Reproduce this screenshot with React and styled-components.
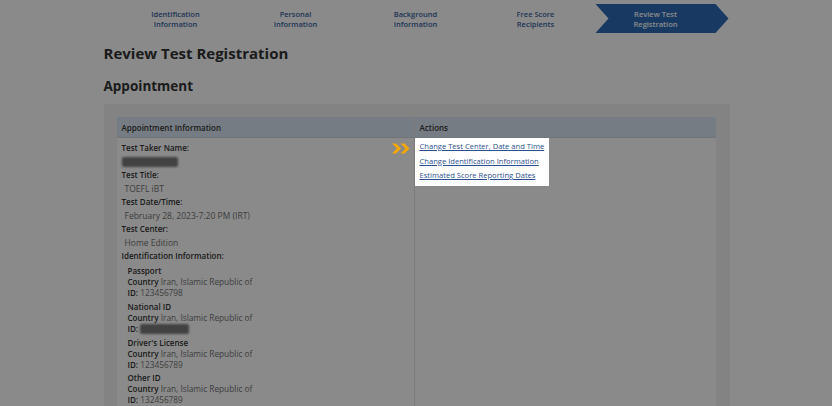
import React from "react";
import styled, { createGlobalStyle } from "styled-components";

const GlobalStyle = createGlobalStyle`
  html, body {
    margin: 0;
    padding: 0;
    background: #ffffff;
    overflow: hidden;
  }
  body {
    font-family: "Open Sans", "Liberation Sans", Arial, sans-serif;
    color: #333333;
  }
`;

const Page = styled.div`
  width: 626px;
  margin: 0 auto;
  padding-left: 1px;
`;

const StepBar = styled.div`
  display: flex;
  margin: 4px 0 0 12px;
  height: 29px;
`;

const Step = styled.div`
  width: ${p => (p.active ? "133px" : "120px")};
  padding-right: ${p => (p.active ? "13px" : "0")};
  box-sizing: border-box;
  display: flex;
  align-items: center;
  justify-content: center;
  text-align: center;
  font-size: 7.5px;
  line-height: 10px;
  font-weight: 600;
  color: ${p => (p.active ? "#ffffff" : "#3a64a0")};
  background: ${p => (p.active ? "#2b6ab5" : "transparent")};
  clip-path: ${p =>
    p.active
      ? "polygon(0 0, 120px 0, 133px 50%, 120px 100%, 0 100%, 13px 50%)"
      : "none"};
`;

const Title = styled.h1`
  margin: 10px 0 0;
  font-size: 15px;
  line-height: 20px;
  font-weight: 700;
  color: #333333;
`;

const SubTitle = styled.h2`
  margin: 14px 0 0;
  font-size: 13.5px;
  line-height: 18px;
  font-weight: 700;
  color: #333333;
`;

const Panel = styled.div`
  margin-top: 9px;
  background: #f3f3f3;
  padding: 13px 14px 13px 13px;
`;

const Table = styled.div`
  display: grid;
  grid-template-columns: 297px 1fr;
  background: #ffffff;
`;

const HeadCell = styled.div`
  background: #dbe6f2;
  border-bottom: 1px solid #cfd9e5;
  height: 20px;
  padding: 0 5px;
  display: flex;
  align-items: center;
  font-size: 8px;
  font-weight: 600;
  color: #333333;
  border-left: ${p => (p.divider ? "1px solid #e6e6e6" : "none")};
`;

const BodyCell = styled.div`
  padding: ${p => (p.divider ? "0" : "3px 5px 8px")};
  border-left: ${p => (p.divider ? "1px solid #e6e6e6" : "none")};
`;

const Label = styled.div`
  font-size: 8px;
  line-height: 13.5px;
  font-weight: 600;
  color: #333333;
`;

const Value = styled.div`
  font-size: 8.5px;
  line-height: 13.5px;
  color: #737373;
  padding-left: ${p => (p.flush ? "0" : "3px")};
`;

const Redacted = styled.span`
  display: inline-block;
  width: ${p => p.w}px;
  height: 10px;
  background: #7a7a7a;
  border-radius: 2px;
  filter: blur(1px);
  vertical-align: middle;
`;

const IdGroup = styled.div`
  padding-left: 6px;
  margin-top: 2.5px;
  font-size: 8.3px;
  line-height: 11px;
`;

const IdType = styled.div`
  font-size: 8px;
  font-weight: 600;
  color: #333333;
`;

const IdLine = styled.div`
  color: #737373;
  b {
    font-size: 8px;
    color: #333333;
    font-weight: 600;
  }
`;

const Spotlight = styled.div`
  position: relative;
  z-index: 10;
  display: flex;
  flex-direction: column;
  width: fit-content;
  gap: 1px;
  padding: 2px 5px 3px;
  background: #ffffff;
  box-shadow: 0 0 0 3000px rgba(0, 0, 0, 0.46);
`;

const Pointer = styled.div`
  position: absolute;
  left: -24px;
  top: 4px;
  z-index: 11;
  display: flex;
`;

const ActionLink = styled.a`
  font-size: 7.6px;
  line-height: 13.5px;
  color: #2b4f8f;
  text-decoration: underline;
  cursor: pointer;
`;

const steps = [
  ["Identification", "Information"],
  ["Personal", "Information"],
  ["Background", "Information"],
  ["Free Score", "Recipients"],
  ["Review Test", "Registration"]
];

const ids = [
  { type: "Passport", id: "123456798" },
  { type: "National ID", id: null },
  { type: "Driver's License", id: "123456789" },
  { type: "Other ID", id: "132456789" }
];

export default function App() {
  return (
    <>
      <GlobalStyle />
      <Page>
        <StepBar>
          {steps.map((s, i) => (
            <Step key={i} active={i === steps.length - 1}>
              {s[0]}
              <br />
              {s[1]}
            </Step>
          ))}
        </StepBar>
        <Title>Review Test Registration</Title>
        <SubTitle>Appointment</SubTitle>
        <Panel>
          <Table>
            <HeadCell>Appointment Information</HeadCell>
            <HeadCell divider>Actions</HeadCell>
            <BodyCell>
              <Label>Test Taker Name:</Label>
              <Value flush>
                <Redacted w={56} />
              </Value>
              <Label>Test Title:</Label>
              <Value>TOEFL iBT</Value>
              <Label>Test Date/Time:</Label>
              <Value>February 28, 2023-7:20 PM (IRT)</Value>
              <Label>Test Center:</Label>
              <Value>Home Edition</Value>
              <Label>Identification Information:</Label>
              {ids.map(g => (
                <IdGroup key={g.type}>
                  <IdType>{g.type}</IdType>
                  <IdLine>
                    <b>Country</b> Iran, Islamic Republic of
                  </IdLine>
                  <IdLine>
                    <b>ID:</b>{" "}
                    {g.id ? g.id : <Redacted w={49} />}
                  </IdLine>
                </IdGroup>
              ))}
            </BodyCell>
            <BodyCell divider>
              <Spotlight>
                <Pointer>
                  <svg width="20" height="13" viewBox="0 0 20 13">
                    <path
                      d="M1 1.5 L5 1.5 L10 6.5 L5 11.5 L1 11.5 L6 6.5 Z"
                      fill="#f7a800"
                    />
                    <path
                      d="M9.5 1.5 L13.5 1.5 L18.5 6.5 L13.5 11.5 L9.5 11.5 L14.5 6.5 Z"
                      fill="#f7a800"
                    />
                  </svg>
                </Pointer>
                <ActionLink>Change Test Center, Date and Time</ActionLink>
                <ActionLink>Change Identification Information</ActionLink>
                <ActionLink>Estimated Score Reporting Dates</ActionLink>
              </Spotlight>
            </BodyCell>
          </Table>
        </Panel>
      </Page>
    </>
  );
}
